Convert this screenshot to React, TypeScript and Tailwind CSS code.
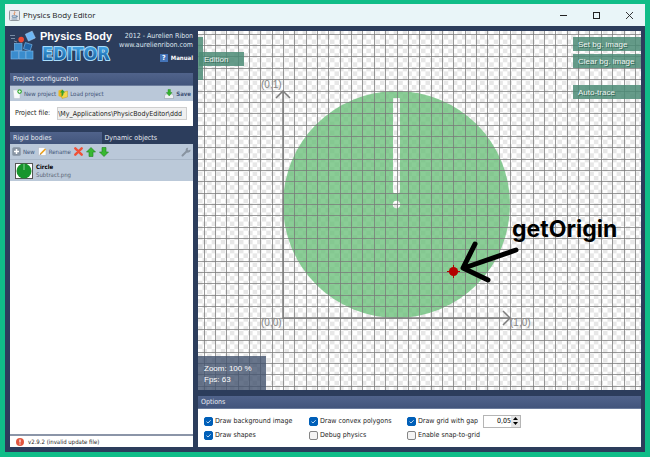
import React from "react";

const UI = 'font-["DejaVu_Sans_Condensed","DejaVu_Sans",sans-serif]';
const ARIAL = 'font-["Liberation_Sans",Arial,sans-serif]';

const GAP = 11.35;
const AXIS = { x: 85, y: 287 };

function range(from: number, to: number) {
  return Array.from({ length: to - from + 1 }, (_, i) => from + i);
}

function JavaIcon() {
  return (
    <svg width="11" height="11" viewBox="0 0 11 11" className="shrink-0">
      <rect x=".5" y=".5" width="10" height="10" rx="1" fill="#e4e6ea" stroke="#8e979f" />
      <path d="M5.6 1.5c1.2 1.3-1.5 1.7-.1 3.4" stroke="#e0722c" fill="none" strokeWidth=".9" />
      <path d="M3 5.8h4.4v1.6H3.4zM7.4 6h1v.8h-1M2.6 9h5.6" stroke="#5d83a6" fill="none" strokeWidth=".8" />
    </svg>
  );
}

function Logo() {
  return (
    <svg width="26" height="30" viewBox="0 0 26 30" className="shrink-0">
      <g stroke="#c8dcee" strokeWidth=".5">
        <path d="M0 5.500h5M1 8.500h4M4 11l3 1" />
      </g>
      <circle cx="11.2" cy="9.600" r="2.800" fill="#ee4a35" />
      <rect x="16.500" y="2.500" width="7.500" height="7.500" fill="#6db6f4" stroke="#a8d4fa" strokeWidth=".5" transform="rotate(-25 20 6)" />
      <g fill="#3a8ccd" stroke="#7dbdee" strokeWidth=".6">
        <rect x="4.500" y="13.500" width="7.500" height="7" />
        <rect x="14.500" y="13.500" width="7" height="6.500" fill="#2166a8" transform="rotate(17 18 16)" />
        <rect x="1" y="21" width="7.500" height="8" />
        <rect x="9" y="21" width="6.500" height="8" />
        <rect x="16" y="21" width="7" height="8" />
      </g>
    </svg>
  );
}

function EditorWord() {
  return (
    <svg width="74" height="24" viewBox="0 0 74 24" role="img" aria-label="Editor">
      <defs>
        <linearGradient id="word" x1="0" y1="0" x2="0" y2="1">
          <stop offset="0.200" stopColor="#3f9fe0" />
          <stop offset="1" stopColor="#0d5090" />
        </linearGradient>
      </defs>
      <text
        x="2"
        y="17"
        fontFamily="DejaVu Sans Condensed, DejaVu Sans, sans-serif"
        fontWeight="700"
        fontSize="18"
        fill="url(#word)"
        stroke="#a9dcfa"
        strokeWidth="2"
        strokeLinejoin="round"
        paintOrder="stroke"
      >
        EDITOR
      </text>
    </svg>
  );
}

function NewProjectIcon() {
  return (
    <svg width="10" height="10" viewBox="0 0 10 10">
      <path d="M1 1h6l1 2v6.5H2z" fill="#f7f9fb" stroke="#b5bec8" strokeWidth=".5" />
      <circle cx="7.6" cy="2.6" r="2.3" fill="#3fae3a" />
      <path d="M7.6 1.3v2.6M6.3 2.6h2.6" stroke="#fff" strokeWidth=".8" />
    </svg>
  );
}

function LoadIcon() {
  return (
    <svg width="10" height="10" viewBox="0 0 10 10">
      <path d="M.5 1.5 4 .5v8L.5 7z" fill="#e8b71c" />
      <path d="M3.500 3.500 9.500 2v6L4 9.500z" fill="#f4d64a" stroke="#b98f14" strokeWidth=".4" />
      <path d="M2 3.500 4.500 .5 7 3.500H5.600c0 2-.5 3-2 4V3.500z" fill="#35a02f" />
    </svg>
  );
}

function SaveIcon() {
  return (
    <svg width="10" height="10" viewBox="0 0 10 10">
      <path d="M1.5 5h7l1 2v2.5H.5V7z" fill="#eef1f4" stroke="#8d97a3" strokeWidth=".5" />
      <path d="M4 .5h2.4v3H8L5.2 7 2.4 3.5H4z" fill="#35b32f" stroke="#1f8a1c" strokeWidth=".4" />
    </svg>
  );
}

function PlusIcon() {
  return (
    <svg width="9" height="9" viewBox="0 0 9 9">
      <rect x=".3" y=".3" width="8.4" height="8.4" rx="1.5" fill="#8793a2" />
      <path d="M4.500 2v5M2 4.500h5" stroke="#fff" strokeWidth="1.5" />
    </svg>
  );
}

function RenameIcon() {
  return (
    <svg width="9" height="9" viewBox="0 0 9 9">
      <path d="M.5.5h6l1.5 2v6H.5z" fill="#fbfcfd" stroke="#aab3be" strokeWidth=".5" />
      <path d="M2.500 7 7.500 2" stroke="#eba01f" strokeWidth="1.7" />
      <path d="M1.8 7.6l1-.4" stroke="#444" strokeWidth=".8" />
    </svg>
  );
}

function DeleteIcon() {
  return (
    <svg width="9" height="9" viewBox="0 0 9 9">
      <path d="M1.300 1.300 7.700 7.700M7.700 1.300 1.300 7.700" stroke="#ef5138" strokeWidth="2.400" strokeLinecap="round" />
    </svg>
  );
}

function ArrowIcon({ down = false }: { down?: boolean }) {
  return (
    <svg width="10" height="10" viewBox="0 0 10 10" className={down ? "rotate-180" : ""}>
      <path d="M5 .5 9.500 5H7v4.500H3V5H.5z" fill="#38b832" stroke="#1f8120" strokeWidth=".6" />
    </svg>
  );
}

function WrenchIcon() {
  return (
    <svg width="10" height="10" viewBox="0 0 10 10">
      <path d="M1.500 8.500 6 4" stroke="#8893a0" strokeWidth="2" strokeLinecap="round" />
      <path d="M9.300 2.400A2.400 2.400 0 1 1 7.200.8L6.600 2.400l1 1z" fill="#8893a0" />
    </svg>
  );
}

function ToolButton({ icon, label, bold }: { icon: React.ReactNode; label: string; bold?: boolean }) {
  return (
    <button
      className={`flex items-center gap-[2px] text-[6px] leading-[10px] whitespace-nowrap text-[#3f5377] ${bold ? "font-bold" : ""}`}
    >
      {icon}
      {label}
    </button>
  );
}

function PanelHeader({ children }: { children: React.ReactNode }) {
  return (
    <h2 className="h-[13px] border-b border-[#6b7c9c] bg-linear-to-b from-[#50638b] to-[#42557c] px-[3px] text-[7px] leading-[12px] text-[#e6ebf2]">
      {children}
    </h2>
  );
}

function Check({ label, checked }: { label: string; checked?: boolean }) {
  return (
    <label className="flex h-[14px] items-center gap-[2px] text-[7px] leading-[10px] whitespace-nowrap text-[#1c1c1c]">
      <span className="relative flex h-[9px] w-[9px]">
        <input
          type="checkbox"
          defaultChecked={checked}
          className="peer h-[9px] w-[9px] appearance-none rounded-[2px] border border-[#858585] bg-[#f4f4f4] checked:border-[#005fb8] checked:bg-[#005fb8]"
        />
        <svg viewBox="0 0 9 9" className="pointer-events-none absolute inset-0 hidden peer-checked:block">
          <path d="M2.500 4.600 4 6l2.700-2.800" fill="none" stroke="#d5e6f6" strokeWidth=".9" />
        </svg>
      </span>
      {label}
    </label>
  );
}

function Scene() {
  return (
    <svg width="100%" height="100%" className="absolute inset-0">
      <defs>
        <pattern id="checker" width="9.100" height="9.100" patternUnits="userSpaceOnUse" x="0" y="4">
          <rect width="9.100" height="9.100" fill="#fff" />
          <rect width="4.550" height="4.550" fill="#e7e7e7" />
          <rect x="4.550" y="4.550" width="4.550" height="4.550" fill="#e7e7e7" />
        </pattern>
        <mask id="dial">
          <circle cx="198.500" cy="173.500" r="113.500" fill="#fff" />
          <rect x="195" y="67" width="7" height="95" rx="1" fill="#000" />
          <circle cx="198.500" cy="173.500" r="3.700" fill="#000" />
        </mask>
      </defs>
      <rect width="100%" height="100%" fill="url(#checker)" />
      <rect width="100%" height="100%" fill="#6dc07c" fillOpacity=".8" mask="url(#dial)" />
      <g fill="#787878" fillOpacity=".75">
        {range(-7, 120).map((k) => (
          <rect key={`v${k}`} x={Math.round(AXIS.x + k * GAP)} y="0" width="1" height="100%" />
        ))}
        {range(-60, 25).map((k) => (
          <rect key={`h${k}`} x="0" y={Math.round(AXIS.y - k * GAP - 0.5)} width="100%" height="1" />
        ))}
      </g>
      <g fill="none" stroke="#7d7d7d" strokeWidth="1.500">
        <path d={`M${AXIS.x} 60V${AXIS.y}H312`} />
        <path d="M78 67l7-7 7 7M305 280l7 7-7 7" />
      </g>
      <g fill="#858585" fontFamily="Liberation Sans, Arial, sans-serif" fontSize="10">
        <text x="63" y="57">(0,1)</text>
        <text x="63" y="295">(0,0)</text>
        <text x="312" y="295">(1,0)</text>
      </g>
      <circle cx="255.500" cy="240.500" r="4.600" fill="#b40000" />
      <path d="M249 240.500h13M255.500 234v13" stroke="#b40000" strokeWidth="1" />
      <path
        d="M318 219 266 237M277 213 265 237 290 249"
        fill="none"
        stroke="#000"
        strokeWidth="5"
        strokeLinecap="round"
        strokeLinejoin="round"
      />
      <text x="314" y="206" fontFamily="Inter, sans-serif" fontWeight="700" fontSize="23" fill="#000">
        getOrigin
      </text>
    </svg>
  );
}

function CanvasButton({ label }: { label: string }) {
  return (
    <button
      className={`${ARIAL} block h-[14px] w-full bg-[#4b8b75]/85 pt-px pl-[5px] text-left text-[8px] leading-[13px] whitespace-nowrap text-[#eef4f1] [text-shadow:1px_1px_0_#365]`}
    >
      {label}
    </button>
  );
}

export default function App() {
  return (
    <div className={`${UI} flex h-screen w-full flex-col border-x-[5px] border-t-4 border-b-[5px] border-[#10bd88] bg-[#2c3d5c]`}>
      <header className="flex h-[22px] shrink-0 items-center gap-[3px] bg-[#e9f5f8] pl-1 text-[#222]">
        <JavaIcon />
        <h1 className='flex-1 font-["Open_Sans","Noto_Sans",sans-serif] text-[8px] leading-[12px]'>Physics Body Editor</h1>
        <div className="flex gap-[24px] pr-[11px]">
          <button aria-label="Minimize">
            <svg width="9" height="9" viewBox="0 0 9 9"><path d="M1 4.500h7" stroke="#222" /></svg>
          </button>
          <button aria-label="Maximize">
            <svg width="9" height="9" viewBox="0 0 9 9"><rect x="1.500" y="1.500" width="6" height="6" fill="none" stroke="#222" /></svg>
          </button>
          <button aria-label="Close">
            <svg width="9" height="9" viewBox="0 0 9 9"><path d="M1 1l7 7M8 1 1 8" stroke="#222" strokeWidth=".9" /></svg>
          </button>
        </div>
      </header>

      <div className="flex min-h-0 flex-1 gap-[5px] pr-1 pb-[5px] pl-[5px]">
        <aside className="flex w-[183px] shrink-0 flex-col">
          <div className="flex h-[47px] shrink-0 pt-[4px]">
            <Logo />
            <div className={`${ARIAL} ml-[4px] w-[74px] shrink-0 text-[11px] leading-[13px] font-bold whitespace-nowrap text-white`}>
              Physics Body
              <EditorWord />
            </div>
            <div className="flex flex-1 flex-col items-end text-[7px] leading-[9px] whitespace-nowrap text-[#dfe6ef]">
              <p className="pt-[2px]">2012 - Aurelien Ribon</p>
              <a href="#site">www.aurelienribon.com</a>
              <a href="#manual" className="mt-[3px] flex items-center gap-[3px] text-[6px] font-bold text-white">
                <span className="flex h-[8px] w-[8px] items-center justify-center bg-[#4474b8] text-[7px] leading-[8px]">?</span>
                Manual
              </a>
            </div>
          </div>

          <section className="mb-[6px] shrink-0 bg-white">
            <PanelHeader>Project configuration</PanelHeader>
            <div className="flex h-[15px] items-center gap-[2px] bg-[#bac8d9] px-[2px]">
              <ToolButton icon={<NewProjectIcon />} label="New project" />
              <ToolButton icon={<LoadIcon />} label="Load project" />
              <div className="flex-1" />
              <ToolButton icon={<SaveIcon />} label="Save" bold />
            </div>
            <div className="flex h-[25px] items-center gap-[7px] pr-[6px] pl-[5px] text-[7px] text-[#222]">
              <label htmlFor="file" className="shrink-0">Project file:</label>
              <input
                id="file"
                readOnly
                value="\My_Applications\PhysicBodyEditor\ddd"
                className="h-[13px] min-w-0 flex-1 border border-[#cfcfcf] bg-[#f0f0f0] text-[7px]"
              />
            </div>
          </section>

          <section className="flex min-h-0 flex-1 flex-col bg-white">
            <div role="tablist" className="flex h-[12px] shrink-0 bg-[#2c3d5c] text-[7px] leading-[12px] text-[#e6ebf2]">
              <button role="tab" aria-selected="true" className="flex-1 bg-linear-to-b from-[#50638b] to-[#42557c] pl-[3px] text-left">
                Rigid bodies
              </button>
              <button role="tab" aria-selected="false" className="flex-1 pl-[3px] text-left">
                Dynamic objects
              </button>
            </div>
            <div className="flex h-[15px] shrink-0 items-center gap-[3px] bg-[#bac8d9] px-[2px]">
              <ToolButton icon={<PlusIcon />} label="New" />
              <ToolButton icon={<RenameIcon />} label="Rename" />
              <button aria-label="Delete"><DeleteIcon /></button>
              <button aria-label="Move up"><ArrowIcon /></button>
              <button aria-label="Move down"><ArrowIcon down /></button>
              <div className="flex-1" />
              <button aria-label="Settings"><WrenchIcon /></button>
            </div>
            <ul className="flex-1">
              <li className="flex h-[22px] items-center gap-[3px] border-t border-[#a9b7c8] bg-[#bbc9d9] pl-[5px]">
                <svg width="18" height="16" viewBox="0 0 18 16">
                  <rect x=".5" y=".5" width="17" height="15" fill="#fff" stroke="#555" />
                  <circle cx="9" cy="8" r="7.500" fill="#17952d" />
                  <path d="M9 1v6" stroke="#8fd09a" />
                </svg>
                <div className="text-[6px] leading-[8px] text-[#5a6675]">
                  <div className="font-bold text-black">Circle</div>
                  <div>Subtract.png</div>
                </div>
              </li>
            </ul>
            <footer className="flex h-[13px] shrink-0 items-center gap-[4px] border-t-2 border-[#8b95a8] pl-[6px] text-[6px] text-[#222]">
              <svg width="8" height="8" viewBox="0 0 8 8">
                <circle cx="4" cy="4" r="4" fill="#e2563f" />
                <path d="M4 1.500v3M4 5.500v1" stroke="#fff" strokeWidth="1.200" />
              </svg>
              v2.9.2 (invalid update file)
            </footer>
          </section>
        </aside>

        <main className="flex min-w-0 flex-1 flex-col gap-[6px] pt-[5px]">
          <div className="relative min-h-0 flex-1 overflow-hidden bg-white">
            <Scene />
            <div className="absolute top-[6px] left-0 h-[43px] w-[5px] bg-[#4b8b75]/85" />
            <div className="absolute top-[21px] left-0 w-[46px] pl-px">
              <CanvasButton label="Edition" />
            </div>
            <div className="absolute top-[6px] right-0 flex w-[68px] flex-col gap-[3px]">
              <CanvasButton label="Set bg. image" />
              <CanvasButton label="Clear bg. image" />
              <div className="pt-[14px]">
                <CanvasButton label="Auto-trace" />
              </div>
            </div>
            <div className={`${ARIAL} absolute bottom-0 left-0 h-[34px] w-[68px] bg-[#42526e]/80 pt-[7px] pl-[6px] text-[8px] leading-[11px] text-white`}>
              <p>Zoom: 100 %</p>
              <p>Fps: 63</p>
            </div>
          </div>

          <section className="shrink-0 bg-white">
            <PanelHeader>Options</PanelHeader>
            <div className="grid h-[38px] grid-cols-[105px_98px_1fr] content-center pl-[6px]">
              <Check label="Draw background image" checked />
              <Check label="Draw convex polygons" checked />
              <div className="flex items-center gap-[5px]">
                <Check label="Draw grid with gap" checked />
                <div className="flex h-[13px] w-[38px] border border-[#b5b5b5] bg-white">
                  <input aria-label="Grid gap" defaultValue="0,05" className="min-w-0 flex-1 text-right text-[7px]" />
                  <div className="flex w-[9px] flex-col bg-[#e6e6e6]">
                    <button aria-label="Increase" className="flex flex-1 items-center justify-center">
                      <svg width="5" height="3" viewBox="0 0 5 3"><path d="M0 3 2.500 0 5 3z" /></svg>
                    </button>
                    <button aria-label="Decrease" className="flex flex-1 items-center justify-center">
                      <svg width="5" height="3" viewBox="0 0 5 3"><path d="M0 0h5L2.500 3z" /></svg>
                    </button>
                  </div>
                </div>
              </div>
              <Check label="Draw shapes" checked />
              <Check label="Debug physics" />
              <Check label="Enable snap-to-grid" />
            </div>
          </section>
        </main>
      </div>
    </div>
  );
}
